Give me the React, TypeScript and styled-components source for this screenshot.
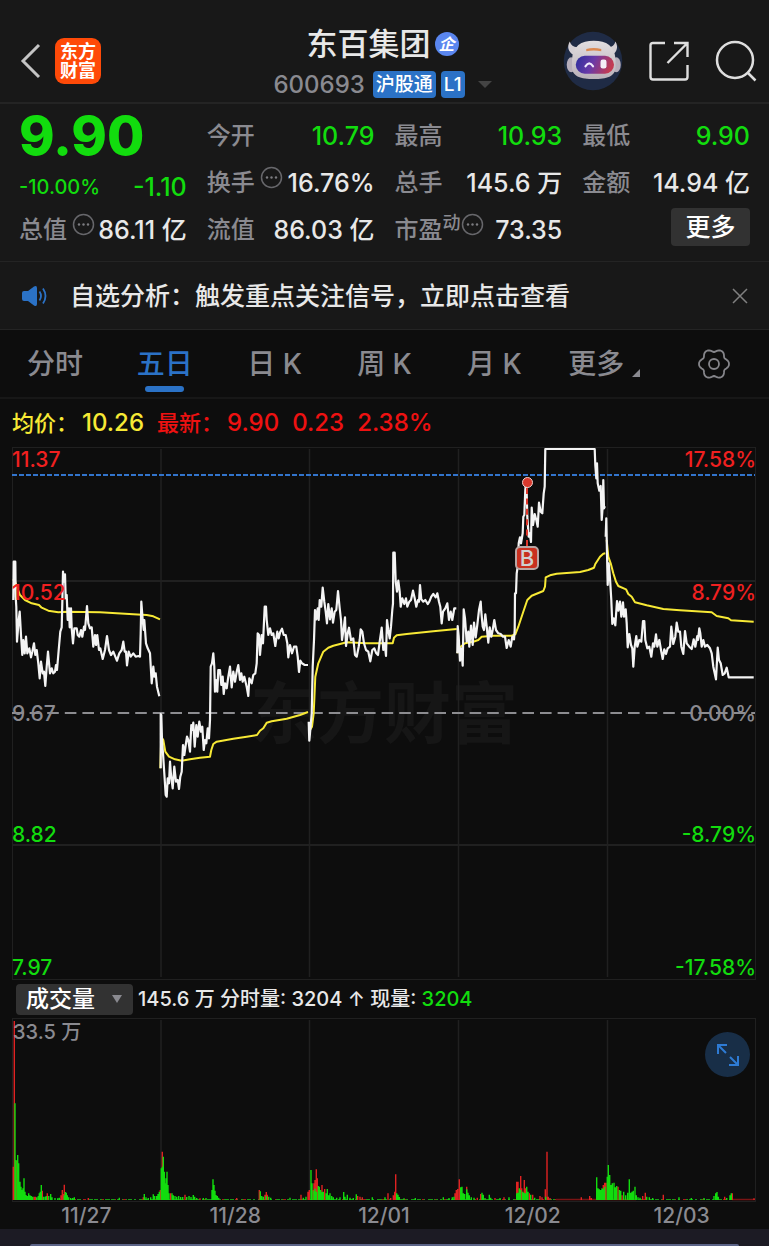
import React from "react";
import styled, { createGlobalStyle, css } from "styled-components";

const color = {
  panel: "#181818",
  base: "#0d0d0d",
  line: "#242424",
  text: "#e8e8e8",
  muted: "#8a8a90",
  green: "#12dc0e",
  red: "#ee1111",
  labelRed: "#f02020",
  yellow: "#f7e935",
  blue: "#2b72c6",
};

const GlobalStyle = createGlobalStyle`
  * { box-sizing: border-box; }
  body {
    margin: 0;
    background: ${color.base};
    color: ${color.text};
    font-family: Inter, "Noto Sans CJK SC", sans-serif;
    font-weight: 500;
  }
  button, select { font: inherit; color: inherit; background: none; border: 0; padding: 0; margin: 0; cursor: pointer; }
  svg { display: block; }
`;

const Page = styled.main`
  display: flex;
  flex-direction: column;
  min-height: 100vh;
`;

/* ---------- header ---------- */

const Header = styled.header`
  display: grid;
  grid-template-columns: 1fr auto 1fr;
  align-items: center;
  height: 104px;
  padding-top: 16px;
  background: ${color.panel};
  border-bottom: 2px solid ${color.line};
`;

const HeaderSide = styled.div<{ $end?: boolean }>`
  display: flex;
  align-items: center;
  gap: ${(p) => (p.$end ? 26 : 14)}px;
  justify-content: ${(p) => (p.$end ? "flex-end" : "flex-start")};
  padding: ${(p) => (p.$end ? "0 12px 0 0" : "0 0 0 20px")};
`;

const IconButton = styled.button`
  display: flex;
  align-items: center;
  justify-content: center;
`;

const Logo = styled.a`
  display: flex;
  width: 46px;
  height: 46px;
  align-items: center;
  justify-content: center;
  border-radius: 9px;
  background: #ff4a08;
  color: #fff;
  font-size: 18px;
  line-height: 19px;
  font-weight: 700;
  text-align: center;
  text-decoration: none;
`;

const Identity = styled.div`
  display: flex;
  flex-direction: column;
  align-items: center;
  padding: 8px 4px 0 0;
`;

const NameRow = styled.div`
  display: flex;
  align-items: center;
  gap: 4px;
`;

const Name = styled.h1`
  margin: 0;
  font-size: 31px;
  line-height: 40px;
  font-weight: 500;
`;

const Verified = styled.span`
  display: flex;
  width: 24px;
  height: 24px;
  align-items: center;
  justify-content: center;
  border-radius: 50%;
  background: #5a86ee;
  color: #fff;
  font-size: 16px;
  line-height: 24px;
  font-weight: 700;
  font-style: italic;
`;

const CodeRow = styled.div`
  display: flex;
  align-items: center;
  gap: 8px;
  height: 41px;
  color: ${color.muted};
  font-size: 24px;
`;

const Tags = styled.span`
  display: flex;
  gap: 5px;
`;

const Tag = styled.span`
  padding: 0 3px;
  border-radius: 4px;
  background: ${color.blue};
  color: #fff;
  font-size: 19px;
  line-height: 27px;
`;

const Caret = styled.span<{ $size: number; $tone: string }>`
  width: 0;
  height: 0;
  border: ${(p) => p.$size}px solid transparent;
  border-top-color: ${(p) => p.$tone};
  border-bottom-width: 0;
`;

const CodeCaret = styled(Caret)`
  margin-left: 5px;
`;

/* ---------- quote ---------- */

const Quote = styled.section`
  display: grid;
  grid-template-columns: repeat(4, 1fr);
  grid-auto-rows: 47px;
  column-gap: 20px;
  padding: 8px 19px;
  background: ${color.panel};
`;

const Cell = styled.div<{ $lowered?: boolean }>`
  display: flex;
  align-items: center;
  justify-content: space-between;
  padding-top: ${(p) => (p.$lowered ? 8 : 0)}px;
  font-size: 24px;
  line-height: 32px;
  white-space: nowrap;
`;

const LastPrice = styled.strong`
  font-size: 54px;
  font-weight: 800;
  color: ${color.green};
`;

const Label = styled.span<{ $tight?: boolean }>`
  display: flex;
  align-items: center;
  gap: ${(p) => (p.$tight ? 0 : 5)}px;
  color: ${color.muted};
`;

const Sup = styled.span`
  align-self: flex-start;
  font-size: 18px;
  line-height: 20px;
`;

const RaisedIcon = styled.span`
  display: flex;
  padding-bottom: 10px;
`;

const Value = styled.span<{ $down?: boolean; $small?: boolean }>`
  color: ${(p) => (p.$down ? color.green : color.text)};
  font-size: ${(p) => (p.$small ? 20 : 25)}px;
`;

const CellEnd = styled(Cell)`
  justify-content: flex-end;
  padding-bottom: 5px;
`;

const MoreButton = styled.button`
  width: 79px;
  height: 38px;
  border-radius: 4px;
  background: #323232;
  color: #fff;
  font-size: 25px;
  line-height: 38px;
`;

/* ---------- notice ---------- */

const Notice = styled.section`
  display: flex;
  align-items: center;
  height: 69px;
  padding: 0 21px;
  gap: 21px;
  background: ${color.panel};
  border-top: 1px solid ${color.line};
  border-bottom: 1px solid ${color.line};
`;

const NoticeText = styled.p`
  flex: 1;
  margin: 0;
  font-size: 25px;
  line-height: 36px;
`;

/* ---------- tabs ---------- */

const Tabs = styled.nav`
  display: grid;
  grid-template-columns: repeat(7, 1fr);
  height: 69px;
  border-bottom: 2px solid #171717;
`;

const Tab = styled.button<{ $active?: boolean }>`
  position: relative;
  display: flex;
  align-items: center;
  justify-content: center;
  color: ${color.muted};
  font-size: 28px;
  line-height: 36px;
  ${(p) =>
    p.$active &&
    css`
      color: ${color.blue};
      &::after {
        content: "";
        position: absolute;
        bottom: 5px;
        width: 39px;
        height: 6px;
        border-radius: 3px;
        background: ${color.blue};
      }
    `}
`;

const Corner = styled.span`
  align-self: flex-end;
  margin: 0 0 20px 8px;
  border-left: 8px solid transparent;
  border-bottom: 8px solid ${color.muted};
`;

/* ---------- price chart ---------- */

const Legend = styled.dl`
  display: flex;
  align-items: center;
  gap: 13px;
  height: 48px;
  margin: 0;
  padding: 0 12px;
  line-height: 30px;
`;

const LegendItem = styled.div<{ $tone: string }>`
  display: flex;
  gap: 4px;
  color: ${(p) => p.$tone};
`;

const LegendName = styled.dt`
  font-size: 22px;
`;

const LegendValue = styled.dd`
  margin: 0;
  font-size: 24px;
`;

const Plot = styled.section<{ $height: number }>`
  position: relative;
  height: ${(p) => p.$height}px;
  margin: 0 13px 0 12px;
`;

const PlotSvg = styled.svg`
  position: absolute;
  inset: 0;
  width: 100%;
  height: 100%;
  overflow: visible;
`;

const Watermark = styled.div`
  position: absolute;
  inset: 0;
  display: flex;
  align-items: center;
  justify-content: center;
  color: #161616;
  font-size: 67px;
  line-height: 80px;
  font-weight: 700;
`;

const Axis = styled.div<{ $right?: boolean }>`
  position: absolute;
  top: 0;
  bottom: 0;
  ${(p) => (p.$right ? "right: 0;" : "left: 0;")}
  display: grid;
  grid-template-rows: repeat(4, 1fr);
  justify-items: ${(p) => (p.$right ? "end" : "start")};
  font-size: 21px;
  line-height: 25px;
`;

const Tick = styled.span<{ $tone: string; $rows: string; $align: string }>`
  grid-column: 1;
  grid-row: ${(p) => p.$rows};
  align-self: ${(p) => p.$align};
  color: ${(p) => p.$tone};
`;

const TradeMarker = styled.div`
  position: absolute;
  top: 30px;
  left: calc(100% * 515 / 744);
  width: 24px;
  margin-left: -12px;
  display: flex;
  flex-direction: column;
  align-items: center;
`;

const TradeDot = styled.span`
  width: 11px;
  height: 11px;
  border: 1px solid #f0d0cc;
  border-radius: 50%;
  background: #d8382c;
`;

const TradeStem = styled.span`
  height: 58px;
  border-left: 2px dashed #e0382c;
`;

const TradeBadge = styled.span`
  width: 24px;
  height: 24px;
  border: 2px solid #b9a6a4;
  border-radius: 5px;
  background: #c9301f;
  color: #d0d0d0;
  font-size: 22px;
  line-height: 20px;
  text-align: center;
`;

/* ---------- volume ---------- */

const VolumeBar = styled.div`
  display: flex;
  align-items: center;
  gap: 5px;
  height: 38px;
  padding-left: 16px;
  font-size: 20px;
  line-height: 26px;
  white-space: pre;
`;

const SelectBox = styled.label`
  position: relative;
  display: flex;
  align-items: center;
`;

const Select = styled.select`
  width: 117px;
  height: 31px;
  padding-left: 10px;
  border-radius: 4px;
  appearance: none;
  background: #323232;
  color: #fff;
  font-size: 23px;
  line-height: 31px;
`;

const SelectCaret = styled(Caret)`
  position: absolute;
  right: 11px;
  border-top-width: 8px;
  pointer-events: none;
`;

const Down = styled.span`
  color: ${color.green};
`;

const VolumeMax = styled.span`
  position: absolute;
  top: 0;
  left: 1px;
  color: ${color.muted};
  font-size: 20px;
  line-height: 28px;
`;

const ExpandButton = styled(IconButton)`
  position: absolute;
  top: 14px;
  right: 6px;
  width: 45px;
  height: 45px;
  border-radius: 50%;
  background: #182e47;
`;

const Dates = styled.div`
  display: grid;
  grid-template-columns: repeat(5, 1fr);
  height: 29px;
  margin: 0 13px 0 12px;
  color: ${color.muted};
  font-size: 21px;
  line-height: 32px;
  text-align: center;
`;

const Sheet = styled.footer`
  display: flex;
  flex: 1;
  flex-direction: column;
  justify-content: flex-end;
  min-height: 17px;
  padding: 0 30px;
  background: #1c1b24;
`;

const SheetEdge = styled.div`
  height: 2px;
  border-radius: 2px 2px 0 0;
  background: #5c6488;
`;

/* ---------- chart data: flat x,y pairs in thirds of a pixel from an origin ---------- */

type Series = { x: number; y: number; pts: number[] };

const prices: Series[] = [
  {
    x: 0, y: 540,
    pts: [40,180,41,65,46,65,47,170,49,200,51,305,56,240,59,215,63,285,67,345,70,300,74,340,78,290,82,340,88,325,93,352,97,335,102,310,106,345,110,330,115,370,119,415,123,365,128,400,132,395,136,438,140,380,144,335,150,400,155,385,160,400,165,395,168,375,171,390,176,330,181,275,185,262,187,190,189,95,191,125,195,103,197,175,200,165,203,240,207,205,209,262,213,205,215,265,219,310,223,265,230,265,233,285,238,290,243,270,247,290,252,260,255,270,261,198,265,250,270,265,275,262,280,320,285,285,288,315,292,285,297,330,301,325,308,357,315,330,321,288,327,330,333,345,340,335,346,350,351,362,358,340,365,330,370,305,374,335,378,335,381,376,386,335,392,350,400,340,407,350,415,348,420,350,422,280,424,185,428,240,431,270,433,240,438,310,443,325,450,340,455,430,460,380,463,410,467,400,471,440,478,469],
  },
  {
    x: 0, y: 540,
    pts: [482,685,482,522,484,525,486,600,489,640,493,700,497,765,500,770,503,715,507,730,510,665,513,705,518,745,523,680,528,725,533,720,537,747,541,710,545,695,549,615,553,645,557,615,561,590,565,600,570,635,574,555,577,570,580,548,584,620,589,555,593,590,598,545,603,575,607,560,611,630,615,600,619,610,623,565,627,595,630,540,632,380,636,370,640,340,643,380,645,455,648,420,652,455,655,390,660,390,664,435,668,410,671,462,675,430,680,445,685,410,690,380,695,442,700,395,705,425,710,395,715,375,720,420,724,400,728,425,733,410,740,440,745,468,748,415,755,430,760,405,766,400,770,370,773,280,777,285,780,345,785,285,789,310,794,200,798,200,800,240,805,285,810,265,815,285,820,280,826,318,832,275,836,295,841,275,846,266,851,285,857,285,862,310,865,352,870,315,876,340,882,320,889,320,893,350,897,396,901,362,906,370,914,375,924,375],
  },
  {
    x: 200, y: 540,
    pts: [326,545,328,602,331,570,335,520,338,380,342,300,345,210,349,238,353,205,356,240,359,180,364,200,368,143,373,185,377,215,381,250,385,192,390,238,395,205,399,248,404,215,409,210,414,153,419,205,423,240,426,300,431,265,435,232,438,318,443,280,447,263,453,300,460,295,465,345,470,350,476,320,479,300,482,268,487,275,492,310,498,330,505,335,511,364,517,330,523,325,529,340,534,345,539,305,545,263,550,330,554,310,558,348,561,240,565,270,569,295,573,260,577,210,579,190,580,38,584,38,587,125,591,155,595,122,599,155,602,200,607,175,613,192,618,175,622,200,628,185,633,180,639,152,644,175,649,200,654,180,657,185,660,135,664,178,670,185,676,180,683,192,688,185,694,170,700,162,707,172,712,160,717,185,721,200,725,250,729,215,736,205,742,190,747,240,752,215,757,240,763,205,769,205],
  },
  {
    x: 440, y: 440,
    pts: [52,640,53,558,56,590,60,662,64,625,68,677,71,508,75,535,80,605,85,575,88,620,93,557,98,615,102,548,107,592,112,555,117,510,122,485,124,515,128,560,132,570,136,523,140,560,145,608,149,562,154,590,158,570,163,540,168,570,175,580,182,582,189,590,195,590,200,624,206,600,212,620,217,590,222,598,224,570,225,460,228,460,230,400,233,380,236,310,240,292,243,310,248,280,250,230,253,225,256,150,258,125,260,160,262,230,266,290,269,280,273,306,275,203,279,255,284,222,289,240,293,260,297,188,302,215,307,220,311,160,314,140,316,27,464,27,466,75,469,115,471,70,473,130,478,152,482,138,485,240,488,200,490,120,492,205,495,198],
  },
  {
    x: 580, y: 440,
    pts: [77,290,79,235,81,340,83,435,86,370,90,415,94,480,97,552,101,535,106,556,111,483,115,512,120,485,124,530,129,487,132,530,137,508,140,550,143,622,148,582,153,615,157,625,160,680,164,620,169,588,172,620,178,600,184,605,187,570,189,543,193,543,196,600,202,625,208,620,214,650,219,610,223,620,228,583,232,620,238,600,243,630,248,657,253,628,258,642,263,625,270,620,274,560,280,612,286,590,290,548,295,575,300,575,304,620,310,642,315,573,320,610,328,620,335,627,341,598,346,620,352,588,354,600,358,565,361,580,365,620,370,600,375,620,382,615,390,625,395,640,400,680,408,718,413,623,417,660,422,670,428,705,434,700,440,683,446,712,521,712],
  },
];

const averages: Series[] = [
  { x: 0, y: 540, pts: [38,120,44,120,50,140,60,165,75,180,95,190,117,195,125,203,145,212,175,217,200,215,300,217,400,223,440,225,460,229,480,238] },
  { x: 0, y: 540, pts: [481,685,484,590,490,600,496,635,507,650,525,658,545,662,570,658,600,653,630,650,634,630,640,612,650,605,700,596,740,590,771,585,780,572,790,565,800,548,815,544,860,536,900,525,924,516] },
  { x: 200, y: 540, pts: [330,570,336,560,341,520,343,480,346,410,355,370,370,335,385,323,400,317,440,307,500,310,578,310,582,293,590,286,620,282,700,274,770,267] },
  { x: 440, y: 440, pts: [52,640,56,625,75,610,100,605,115,600,125,590,160,587,215,587,226,583,235,560,250,515,262,480,275,467,310,453,315,440,317,412,330,406,350,401,420,396,445,390,462,383,466,372,480,350,490,341,496,340] },
  { x: 580, y: 440, pts: [80,300,85,350,92,370,100,400,108,425,115,438,138,448,145,462,155,470,165,487,200,496,250,507,300,511,395,517,410,528,445,535,453,541,521,545] },
];

const toPath = ({ x, y, pts }: Series) => {
  let d = "";
  for (let i = 0; i < pts.length; i += 2) {
    d += `${i ? "L" : "M"}${(x + pts[i] / 3).toFixed(1)} ${(y + pts[i + 1] / 3).toFixed(1)}`;
  }
  return d;
};

/* volume bars as "x:height" in thirds of a pixel */
const fallingBars =
  "45:290 48:120 53:135 56:110 60:55 63:40 66:30 69:35 72:65 75:25 78:15 82:12 86:20 90:14 94:12 98:10 110:8 115:12 118:20 121:25 124:45 130:10 135:10 139:12 146:12 152:18 156:8 165:6 173:5 178:7 193:14 196:24 199:22 202:14 206:8 212:6 218:6 223:8 358:7 433:18 438:8 445:6 452:8 460:17 464:12 470:12 474:18 478:25 484:95 487:100 490:130 493:85 496:50 498:65 501:85 504:45 507:20 516:20 520:14 525:12 530:10 536:12 542:9 548:9 560:9 567:12 573:9 580:15 584:10 590:6 610:6 618:6 636:30 639:62 642:45 645:28 648:15 652:12 656:7 781:26 785:12 790:10 799:12 806:10 812:7 870:7 910:7 918:10 933:90 936:50 942:28 945:34 949:25 955:42 958:40 962:30 966:24 970:25 978:20 982:33 986:14 990:20 995:12 1000:8 1010:7 1020:8 1031:24 1035:10 1042:16 1050:7 1060:6 1069:17 1117:8 1155:8 1190:20 1194:16 1198:9 1212:5 1246:6 1330:8 1347:6 1357:8 1362:10 1382:38 1386:40 1390:20 1394:18 1400:32 1404:22 1408:14 1414:8 1422:7 1446:22 1450:16 1455:6 1468:16 1472:7 1500:6 1527:8 1550:20 1554:22 1558:35 1562:30 1568:25 1572:22 1576:20 1580:40 1584:25 1592:16 1604:7 1637:10 1790:68 1794:35 1798:32 1802:30 1806:35 1810:34 1814:40 1822:70 1825:105 1829:75 1833:45 1837:50 1842:52 1846:38 1850:42 1858:30 1862:28 1871:25 1877:14 1883:22 1888:62 1892:22 1896:25 1900:28 1905:40 1909:14 1914:8 1920:7 1940:10 1948:8 1958:6 2037:8 2074:6 2112:6 2142:12 2147:20 2151:24 2155:10 2180:6 2190:14 2194:20";
const risingBars =
  "40:100 43:537 50:118 102:10 106:10 127:28 142:20 183:14 187:30 190:18 193:46 265:6 430:8 481:30 487:145 512:20 555:16 600:5 710:6 778:30 795:16 799:24 802:16 903:16 924:25 928:30 939:30 942:50 945:60 949:92 952:65 966:45 974:33 1073:12 1080:10 1087:8 1164:20 1172:6 1180:14 1184:25 1187:77 1365:20 1369:30 1373:33 1378:62 1400:40 1432:7 1442:18 1485:6 1512:8 1550:55 1554:55 1562:72 1565:35 1573:60 1576:35 1588:20 1598:16 1620:12 1626:8 1636:32 1641:145 1645:10 1650:6 1744:8 1769:12 1774:6 1810:45 1814:52 1818:52 1854:40 1866:14 1928:12 1936:22 1990:16 2174:10 2197:20 2262:5";

const barsToPath = (bars: string) =>
  bars
    .split(" ")
    .map((bar) => {
      const [x, h] = bar.split(":").map(Number);
      return `M${(x / 3).toFixed(1)} 1200V${(1200 - h / 3).toFixed(1)}`;
    })
    .join("");

const dayLines = [161, 309.5, 458.5, 607.5];

/* six-lobed gear outline around (16, 16) */
const gearPath =
  Array.from({ length: 72 }, (_, i) => {
    const a = (i / 72) * Math.PI * 2;
    const r = 13.7 + 1.5 * Math.cos(6 * a) - 0.2 * Math.cos(12 * a);
    return `${i ? "L" : "M"}${(16 + r * Math.cos(a)).toFixed(2)} ${(16 + r * Math.sin(a)).toFixed(2)}`;
  }).join("") + "Z";

const InfoIcon = () => (
  <RaisedIcon>
    <svg width="23" height="23" viewBox="0 0 23 23" aria-hidden="true">
      <circle cx="11.5" cy="11.5" r="10" fill="none" stroke="#67676b" strokeWidth="1.5" />
      <g fill="#7c7c80">
        <circle cx="7" cy="11.5" r="1.2" />
        <circle cx="11.5" cy="11.5" r="1.2" />
        <circle cx="16" cy="11.5" r="1.2" />
      </g>
    </svg>
  </RaisedIcon>
);

const Robot = () => (
  <svg width="60" height="60" viewBox="0 0 80 80" aria-hidden="true">
    <defs>
      <linearGradient id="visor" x1="0" y1="0" x2="1" y2="0.2">
        <stop offset="0" stopColor="#2b2f9c" />
        <stop offset="0.5" stopColor="#6a3aa8" />
        <stop offset="1" stopColor="#c23a52" />
      </linearGradient>
      <linearGradient id="shell" x1="0" y1="0" x2="0" y2="1">
        <stop offset="0" stopColor="#e2dee0" />
        <stop offset="1" stopColor="#b9b1b9" />
      </linearGradient>
    </defs>
    <circle cx="40" cy="40" r="39" fill="#1f2b45" />
    <path d="M9 14C5 21 7 28 14 32L23 21C16 23 11 20 9 14ZM70 14C74 21 72 28 66 32L57 21C64 23 68 20 70 14Z" fill="#d4cfd4" />
    <ellipse cx="11" cy="45" rx="6" ry="10" fill="#b6aeba" />
    <ellipse cx="71" cy="45" rx="6" ry="10" fill="#b6aeba" />
    <path d="M12 38C13 20 24 13 41 13S69 20 70 38V48C70 61 58 64 41 64S12 61 12 48Z" fill="url(#shell)" />
    <path d="M31 24Q41 21 51 24V27Q41 25 31 27Z" fill="#dc8850" />
    <rect x="17" y="33" width="51" height="24" rx="12" fill="url(#visor)" />
    <path d="M30 47Q35 39 40 47" fill="none" stroke="#f0eafc" strokeWidth="3" strokeLinecap="round" />
    <rect x="50" y="38" width="8" height="12" rx="3" fill="#f4eef8" />
  </svg>
);

type Tone = { left: string; right: string; tone: string; rows: string; align: string };

const ticks: Tone[] = [
  { left: "11.37", right: "17.58%", tone: color.labelRed, rows: "1", align: "start" },
  { left: "10.52", right: "8.79%", tone: color.labelRed, rows: "2", align: "start" },
  { left: "9.67", right: "0.00%", tone: color.muted, rows: "2 / 4", align: "center" },
  { left: "8.82", right: "-8.79%", tone: color.green, rows: "3", align: "end" },
  { left: "7.97", right: "-17.58%", tone: color.green, rows: "4", align: "end" },
];

export default function App() {
  return (
    <>
      <GlobalStyle />
      <Page>
        <Header>
          <HeaderSide>
            <IconButton aria-label="返回">
              <svg width="21" height="36" viewBox="0 0 21 36" fill="none" stroke="#c4c4c4" strokeWidth="3">
                <path d="M19 2L3 18L19 34" />
              </svg>
            </IconButton>
            <Logo href="#home">
              东方
              <br />
              财富
            </Logo>
          </HeaderSide>
          <Identity>
            <NameRow>
              <Name>东百集团</Name>
              <Verified>企</Verified>
            </NameRow>
            <CodeRow>
              600693
              <Tags>
                <Tag>沪股通</Tag>
                <Tag>L1</Tag>
              </Tags>
              <CodeCaret $size={7} $tone="#444" />
            </CodeRow>
          </Identity>
          <HeaderSide $end>
            <IconButton aria-label="智能助手">
              <Robot />
            </IconButton>
            <IconButton aria-label="分享">
              <svg width="40" height="40" viewBox="0 0 40 40" fill="none" stroke="#dedede" strokeWidth="2.4">
                <path d="M16 2H4Q1.5 2 1.5 4.5V36Q1.5 38.5 4 38.5H36Q38.5 38.5 38.5 36V24M25 2H38.5V16M38 2.5L18.5 22" />
              </svg>
            </IconButton>
            <IconButton aria-label="搜索">
              <svg width="42" height="42" viewBox="0 0 42 42" fill="none" stroke="#dedede" strokeWidth="2.5">
                <circle cx="20" cy="20" r="18" />
                <path d="M32.5 32.5L40.5 40.5" />
              </svg>
            </IconButton>
          </HeaderSide>
        </Header>

        <Quote>
          <Cell>
            <LastPrice>9.90</LastPrice>
          </Cell>
          <Cell>
            <Label>今开</Label>
            <Value $down>10.79</Value>
          </Cell>
          <Cell>
            <Label>最高</Label>
            <Value $down>10.93</Value>
          </Cell>
          <Cell>
            <Label>最低</Label>
            <Value $down>9.90</Value>
          </Cell>
          <Cell $lowered>
            <Value $down $small>-10.00%</Value>
            <Value $down>-1.10</Value>
          </Cell>
          <Cell>
            <Label>
              换手
              <InfoIcon />
            </Label>
            <Value>16.76%</Value>
          </Cell>
          <Cell>
            <Label>总手</Label>
            <Value>145.6 万</Value>
          </Cell>
          <Cell>
            <Label>金额</Label>
            <Value>14.94 亿</Value>
          </Cell>
          <Cell>
            <Label>
              总值
              <InfoIcon />
            </Label>
            <Value>86.11 亿</Value>
          </Cell>
          <Cell>
            <Label>流值</Label>
            <Value>86.03 亿</Value>
          </Cell>
          <Cell>
            <Label $tight>
              市盈
              <Sup>动</Sup>
              <InfoIcon />
            </Label>
            <Value>73.35</Value>
          </Cell>
          <CellEnd>
            <MoreButton>更多</MoreButton>
          </CellEnd>
        </Quote>

        <Notice>
          <svg width="28" height="22" viewBox="0 0 28 22" aria-hidden="true">
            <path d="M3 6H7L13 1.5Q16 0 16 3V19Q16 22 13 20.5L7 16H3Q1 16 1 14V8Q1 6 3 6Z" fill={color.blue} />
            <path d="M18.5 6.5Q21.5 11 18.5 15.5M22 3.5Q27 11 22 18.5" fill="none" stroke={color.blue} strokeWidth="1.8" />
          </svg>
          <NoticeText>自选分析：触发重点关注信号，立即点击查看</NoticeText>
          <IconButton aria-label="关闭">
            <svg width="16" height="16" viewBox="0 0 16 16" stroke="#808080" strokeWidth="1.5">
              <path d="M1 1L15 15M15 1L1 15" />
            </svg>
          </IconButton>
        </Notice>

        <Tabs>
          <Tab>分时</Tab>
          <Tab $active>五日</Tab>
          <Tab>日 K</Tab>
          <Tab>周 K</Tab>
          <Tab>月 K</Tab>
          <Tab>
            更多
            <Corner />
          </Tab>
          <Tab aria-label="设置">
            <svg width="32" height="32" viewBox="0 0 32 32" fill="none" stroke="#85858a" strokeWidth="1.8">
              <circle cx="16" cy="16" r="5" />
              <path d={gearPath} strokeLinejoin="round" />
            </svg>
          </Tab>
        </Tabs>

        <Legend>
          <LegendItem $tone={color.yellow}>
            <LegendName>均价：</LegendName>
            <LegendValue>10.26</LegendValue>
          </LegendItem>
          <LegendItem $tone={color.red}>
            <LegendName>最新：</LegendName>
            <LegendValue>9.90</LegendValue>
          </LegendItem>
          <LegendItem $tone={color.red}>
            <LegendValue>0.23</LegendValue>
          </LegendItem>
          <LegendItem $tone={color.red}>
            <LegendValue>2.38%</LegendValue>
          </LegendItem>
        </Legend>

        <Plot $height={533}>
          <Watermark aria-hidden="true">东方财富</Watermark>
          <PlotSvg viewBox="12 447 744 533" preserveAspectRatio="none" fill="none">
            <g stroke="#202020">
              <rect x="12.5" y="447.5" width="743" height="532" />
              <path d="M12 581H756M12 845H756" strokeWidth="2" />
              {dayLines.map((x) => (
                <path key={x} d={`M${x} 449V977`} strokeWidth="1.5" />
              ))}
            </g>
            <path d="M12 475H755" stroke="#3274cc" strokeWidth="2" strokeDasharray="5 2" />
            <path d="M12 713H755" stroke="#8c8c90" strokeWidth="1.8" strokeDasharray="11.6 6" />
            <g stroke={color.yellow} strokeWidth="2" strokeLinejoin="round">
              {averages.map((s, i) => (
                <path key={i} d={toPath(s)} />
              ))}
            </g>
            <g stroke="#f4f4f4" strokeWidth="2.2" strokeLinejoin="round">
              {prices.map((s, i) => (
                <path key={i} d={toPath(s)} />
              ))}
            </g>
          </PlotSvg>
          <TradeMarker>
            <TradeDot />
            <TradeStem />
            <TradeBadge>B</TradeBadge>
          </TradeMarker>
          <Axis>
            {ticks.map((t) => (
              <Tick key={t.left} $tone={t.tone} $rows={t.rows} $align={t.align}>
                {t.left}
              </Tick>
            ))}
          </Axis>
          <Axis $right>
            {ticks.map((t) => (
              <Tick key={t.right} $tone={t.tone} $rows={t.rows} $align={t.align}>
                {t.right}
              </Tick>
            ))}
          </Axis>
        </Plot>

        <VolumeBar>
          <SelectBox>
            <Select aria-label="指标" defaultValue="volume">
              <option value="volume">成交量</option>
            </Select>
            <SelectCaret $size={5} $tone={color.muted} />
          </SelectBox>
          <span>
            145.6 万 分时量: 3204 ↑ 现量: <Down>3204</Down>
          </span>
        </VolumeBar>

        <Plot $height={182}>
          <PlotSvg viewBox="12 1018 744 182" preserveAspectRatio="none" fill="none">
            <g stroke="#202020">
              <rect x="12.5" y="1018.5" width="743" height="183" />
              {dayLines.map((x) => (
                <path key={x} d={`M${x} 1020V1200`} strokeWidth="1.5" />
              ))}
            </g>
            <path d="M60 1199.5H750" stroke="#179c14" strokeDasharray="4 2 2 3 5 1" />
            <path d="M62 1199.5H750" stroke="#a81a1a" strokeDasharray="2 11 1 7 3 16" />
            <path d="M556 1199.5H636M732 1199.5H755" stroke="#7a1414" strokeWidth="1.5" />
            <path d={barsToPath(risingBars)} stroke="#e02222" strokeWidth="1.4" />
            <path d={barsToPath(fallingBars)} stroke={color.green} strokeWidth="1.4" />
          </PlotSvg>
          <VolumeMax>33.5 万</VolumeMax>
          <ExpandButton aria-label="全屏">
            <svg width="24" height="24" viewBox="0 0 24 24" fill="none" stroke="#2e7bd4" strokeWidth="2">
              <path d="M2 11V2H11M2.5 2.5L10 10M22 13V22H13M21.5 21.5L14 14" />
            </svg>
          </ExpandButton>
        </Plot>

        <Dates>
          <span>11/27</span>
          <span>11/28</span>
          <span>12/01</span>
          <span>12/02</span>
          <span>12/03</span>
        </Dates>

        <Sheet>
          <SheetEdge />
        </Sheet>
      </Page>
    </>
  );
}
